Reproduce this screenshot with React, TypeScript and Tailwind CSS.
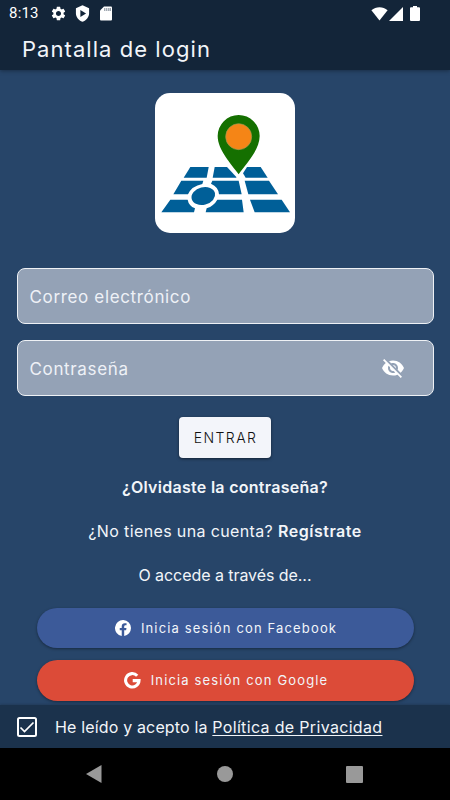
import type { ReactNode } from 'react'
import { MdVisibilityOff, MdSettings } from 'react-icons/md'

function StatusBar() {
  return (
    <div className="flex h-[27px] items-center justify-between pl-[9px] pr-[30px] text-white">
      <div className="flex items-center">
        <span className="w-[41px] font-[Roboto] text-[15px] leading-[27px] tracking-[0.2px]">8:13</span>
        <MdSettings className="h-[17px] w-[17px]" />
        <svg viewBox="0 0 24 24" className="ml-[7px] h-[17px] w-[17px]" fill="currentColor" fillRule="evenodd">
          <path d="M12 .5 2.700 4.500V12c0 5 4 10 9.300 11.500 5.300-1.500 9.300-6.500 9.300-11.500V4.500zM9 7v10l8-5z" />
        </svg>
        <svg viewBox="0 0 12 15" className="ml-[9px] h-[15px] w-[12px]" fill="currentColor">
          <path d="M4 .5h7q1 0 1 1v12q0 1-1 1H1q-1 0-1-1v-9z" />
          <path d="M4.800 2v3M6.800 2v3M8.800 2v3M10.300 2v3" stroke="#7d8894" />
        </svg>
      </div>
      <div className="flex items-center">
        <svg viewBox="0 0 17 15" className="h-[15px] w-[17px]" fill="currentColor"><path d="M8.500 14.500.4 4.200C5 .100 12 .100 16.600 4.200z" /></svg>
        <svg viewBox="0 0 14 14" className="ml-px h-[14px] w-[14px]" fill="currentColor"><path d="M14 0v14H0z" /></svg>
        <svg viewBox="0 0 10 15" className="ml-[7px] h-[15px] w-[10px]" fill="currentColor"><path d="M3 0h4v1.300h2q1 0 1 1V14q0 1-1 1H1q-1 0-1-1V2.300q0-1 1-1h2z" /></svg>
      </div>
    </div>
  )
}

function Logo() {
  return (
    <svg viewBox="30 24 420 420" className="h-[140px] w-[140px] rounded-[15px] bg-white">
      <g fill="#005f98">
        <path d="M136 246h55l-6 32h-69z" />
        <path d="M209 246h37l28 30v2h-71z" />
        <path d="M306 246h41l21 32h-66l-8-13z" />
        <path d="M109 287h66l-3 10q-32 6-43 31H85z" />
        <path d="M202 287h79l9 41h-68q-1-22-24-32z" />
        <path d="M299 287h73l27 41h-89z" />
        <path d="M76 344h52q3 18 22 26l-3 12H49z" />
        <path d="M217 344h74l5 38H182l3-12q22-8 32-26z" />
        <path d="M315 344h95l25 38H329z" />
        <ellipse cx="175" cy="333" rx="36" ry="26" transform="rotate(-14 175 333)" />
      </g>
      <path d="M281 268c-22-31-63-73-63-115a63 63 0 0 1 126 0c0 42-41 84-63 115z" fill="#157000" />
      <circle cx="281" cy="155" r="39" fill="#f58516" stroke="#9f9a55" strokeWidth="2" />
    </svg>
  )
}

function Field({ label, icon }: { label: string; icon?: ReactNode }) {
  return (
    <div className="flex h-[56px] items-center justify-between rounded-[8px] border border-[#eef1f5] bg-[#94a2b6] pl-[12px] pr-[28px] text-[#eef1f6]">
      <span className="pt-[3px] text-[17px] tracking-[0.65px]">{label}</span>
      {icon}
    </div>
  )
}

export default function App() {
  return (
    <div className="flex h-[800px] w-[450px] flex-col overflow-hidden bg-[#274569] font-[Inter,sans-serif] text-[#f2f5f9]">
      <header className="h-[70px] shrink-0 bg-[#132539] shadow-[0_1px_4px_rgba(0,0,0,0.35)]">
        <StatusBar />
        <h1 className="pl-[22px] pt-px text-[22px] leading-[42px] tracking-[1.05px]">Pantalla de login</h1>
      </header>

      <main className="flex h-[635px] shrink-0 flex-col items-center pt-[23px]">
        <Logo />
        <div className="mt-[35px] flex w-[417px] flex-col gap-[16px]">
          <Field label="Correo electrónico" />
          <Field label="Contraseña" icon={<MdVisibilityOff className="h-[24px] w-[24px] text-white" />} />
        </div>
        <button className="mt-[21px] h-[41px] w-[92px] rounded-[4px] bg-[#f3f5fa] pl-px text-[14px] font-light tracking-[1.45px] text-[#111] shadow-[0_1px_3px_rgba(0,0,0,0.5)]">ENTRAR</button>
        <p className="mt-[17px] text-[16px] font-semibold leading-[24px] tracking-[0.28px]">¿Olvidaste la contraseña?</p>
        <p className="mt-[20px] text-[16px] leading-[24px] tracking-[0.37px]">¿No tienes una cuenta? <b className="font-semibold tracking-[0.5px]">Regístrate</b></p>
        <p className="mt-[20px] text-[16px] leading-[24px] tracking-[-0.06px]">O accede a través de...</p>
        <div className="mt-[21px] flex w-[377px] flex-col gap-[12px] text-[13px] tracking-[1.15px]">
          <button className="flex h-[40px] items-center justify-center gap-[10px] rounded-full bg-[#3c5a99] pl-[2px] shadow-[0_1px_3px_rgba(0,0,0,0.4)]">
            <svg viewBox="0 0 24 24" className="h-[16px] w-[16px]" fill="#fff"><path d="M24 12A12 12 0 1 0 10.100 23.900v-8.400H7.100V12h3V9.400c0-3 1.800-4.700 4.500-4.700 1.300 0 2.700.2 2.700.2v3h-1.500c-1.500 0-2 .9-2 1.900V12h3.400l-.5 3.500h-2.900v8.400A12 12 0 0 0 24 12z" /></svg>
            <span className="pt-px">Inicia sesión con Facebook</span>
          </button>
          <button className="flex h-[41px] items-center justify-center gap-[10px] rounded-full bg-[#dc4b38] pl-[2px] shadow-[0_1px_3px_rgba(0,0,0,0.4)]">
            <svg viewBox="0 0 17 17" className="h-[17px] w-[17px]" fill="none" stroke="#fff" strokeWidth="3.100"><path d="M13.200 3.700A6.700 6.700 0 1 0 15 8.600H8.700" /></svg>
            <span>Inicia sesión con Google</span>
          </button>
        </div>
      </main>

      <label className="relative flex h-[43px] shrink-0 items-center bg-[#1b324c] pl-[17px] shadow-[0_-1px_2px_rgba(0,0,0,0.15)]">
        <svg viewBox="0 0 20 20" className="h-[20px] w-[20px]" fill="none" stroke="#fff" strokeWidth="2"><rect x="1" y="1" width="18" height="18" rx="1.500" /><path d="m3.500 10.500 4 4 9-9" strokeWidth="1.700" /></svg>
        <span className="ml-[18px] text-[16px] tracking-[0.16px]">He leído y acepto la <a className="tracking-[0.33px] underline underline-offset-2">Política de Privacidad</a></span>
      </label>

      <nav className="flex h-[52px] shrink-0 items-center justify-between bg-black pl-[86px] pr-[87px]">
        <svg viewBox="0 0 16 18" className="h-[18px] w-[16px]" fill="#999"><path d="M15.500 0v18L0 9z" /></svg>
        <span className="ml-px h-[16px] w-[16px] rounded-full bg-[#999]" />
        <span className="h-[17px] w-[17px] rounded-[1px] bg-[#999]" />
      </nav>
    </div>
  )
}
